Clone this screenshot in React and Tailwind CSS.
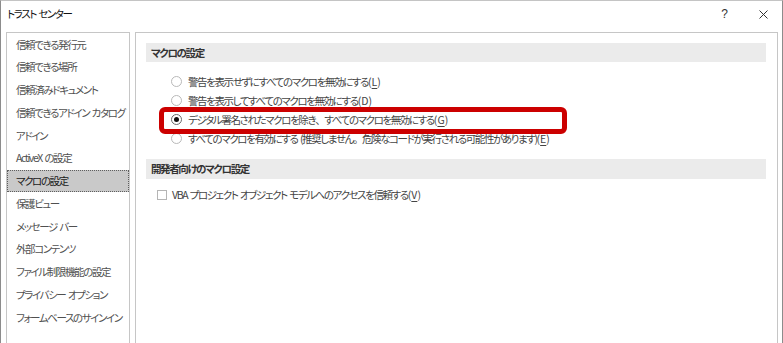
import React from "react";

const jp = "font-['Noto_Sans_CJK_JP',sans-serif] [font-feature-settings:'palt']";
const txt = "text-[10.5px] tracking-[-1.4px] [word-spacing:1.5px]";

function P({ c }) {
  return <span className="[font-feature-settings:normal]">{c}</span>;
}

function Acc({ k }) {
  return (
    <span className="tracking-[0px]">
      (<span className="underline underline-offset-2">{k}</span>)
    </span>
  );
}

const items = [
  "信頼できる発行元",
  "信頼できる場所",
  "信頼済みドキュメント",
  "信頼できるアドイン カタログ",
  "アドイン",
  "ActiveX の設定",
  "マクロの設定",
  "保護ビュー",
  "メッセージ バー",
  "外部コンテンツ",
  "ファイル制限機能の設定",
  "プライバシー オプション",
  "フォームベースのサインイン",
];

function Radio({ checked, children, acc }) {
  return (
    <div className="flex h-[19px] items-center">
      <span
        className={
          "flex h-[11px] w-[11px] shrink-0 items-center justify-center rounded-full border bg-white " +
          (checked ? "border-[#6a6a6a]" : "border-[#b9b9b9]")
        }
      >
        {checked && <span className="h-[5px] w-[5px] rounded-full bg-[#111]" />}
      </span>
      <span className={"ml-[6px] whitespace-nowrap text-[#444] " + txt}>
        {children}
        <Acc k={acc} />
      </span>
    </div>
  );
}

export default function App() {
  return (
    <div
      className={
        "flex h-[343px] w-[783px] flex-col overflow-hidden border-x border-t border-x-[#8c8c8c] border-t-[#c4c4c4] bg-white " +
        jp
      }
    >
      {/* title bar */}
      <div className="flex h-[26px] shrink-0 items-center justify-between pl-[6px] pr-[14px]">
        <span className={"text-[#111] " + txt}>トラスト センター</span>
        <div className="flex items-center gap-[31px]">
          <span className="font-['Liberation_Sans',sans-serif] text-[12px] leading-none text-[#333]">?</span>
          <svg width="9" height="9" viewBox="0 0 9 9" className="block">
            <path d="M0.5 0.5 L8.5 8.5 M8.5 0.5 L0.5 8.5" stroke="#333" strokeWidth="1" fill="none" />
          </svg>
        </div>
      </div>

      {/* body */}
      <div className="mt-[5px] flex flex-1 pl-[5px]">
        {/* left list */}
        <div className="w-[124px] shrink-0 border border-b-0 border-[#c6c6c6]">
          {items.map((t) => {
            const sel = t === "マクロの設定";
            return (
              <div
                key={t}
                className={
                  "flex h-[22.75px] items-center whitespace-nowrap " +
                  txt +
                  " " +
                  (sel
                    ? "border border-dotted border-[#5e5e5e] bg-[#c9c9c9] pl-[8px] text-[#1a1a1a]"
                    : "pl-[9px] text-[#505050]")
                }
              >
                {t}
              </div>
            );
          })}
        </div>

        {/* right panel */}
        <div className="ml-[5px] w-[643px] shrink-0 border border-b-0 border-[#c6c6c6] pl-[10px] pr-[11px] pt-[10px]">
          <div className={"flex h-[19px] items-center bg-[#ebebeb] pl-[5px] font-bold text-[#333] " + txt}>
            マクロの設定
          </div>

          <div className="relative mt-[10px] pl-[25px]">
            <Radio acc="L">警告を表示せずにすべてのマクロを無効にする</Radio>
            <Radio acc="D">警告を表示してすべてのマクロを無効にする</Radio>
            <Radio checked acc="G">
              デジタル署名されたマクロを除き<P c="、" />すべてのマクロを無効にする
            </Radio>
            <Radio acc="E">
              すべてのマクロを有効にする (推奨しません<P c="。" />危険なコードが実行される可能性があります)
            </Radio>
            <div className="pointer-events-none absolute left-[13px] top-[35px] h-[27px] w-[408px] rounded-[6px] border-[5px] border-[#cc0000]" />
          </div>

          <div className={"mt-[11px] flex h-[20px] items-center bg-[#ebebeb] pl-[5px] font-bold text-[#333] " + txt}>
            開発者向けのマクロ設定
          </div>

          <div className="mt-[6px] flex h-[20px] items-center pl-[11px]">
            <span className="h-[10px] w-[10px] shrink-0 border border-[#b5b5b5] bg-white" />
            <span className={"ml-[5px] whitespace-nowrap text-[#444] " + txt}>
              VBA プロジェクト オブジェクト モデルへのアクセスを信頼する
              <Acc k="V" />
            </span>
          </div>
        </div>
      </div>
    </div>
  );
}
